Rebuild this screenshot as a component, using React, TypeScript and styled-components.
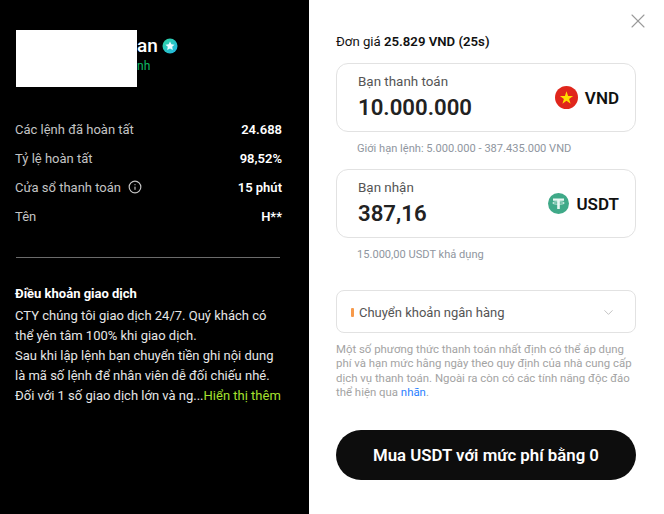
import styled, { createGlobalStyle } from 'styled-components';
import { FiChevronDown, FiInfo, FiX } from 'react-icons/fi';

const GlobalStyle = createGlobalStyle`
  html, body {
    margin: 0;
    padding: 0;
    background: #fff;
    font-family: Roboto, "Noto Sans", "Liberation Sans", sans-serif;
  }
  * {
    box-sizing: border-box;
  }
`;

const stats = [
  { label: 'Các lệnh đã hoàn tất', value: '24.688' },
  { label: 'Tỷ lệ hoàn tất', value: '98,52%' },
  { label: 'Cửa sổ thanh toán', value: '15 phút', info: true },
  { label: 'Tên', value: 'H**' },
];

const App = () => {
  return (
    <>
      <GlobalStyle />
      <Page>
        <SidePanel>
          <Merchant>
            <Redaction />
            <MerchantText>
              <MerchantName>
                an
                <svg width="16" height="16" viewBox="0 0 16 16">
                  <defs>
                    <linearGradient id="badge" x1="0" y1="0" x2="1" y2="1">
                      <stop offset="0" stopColor="#2fd6a0" />
                      <stop offset="1" stopColor="#22b4e6" />
                    </linearGradient>
                  </defs>
                  <circle cx="8" cy="8" r="7.5" fill="url(#badge)" />
                  <path
                    d="M8 3.4l1.4 2.9 3.1.4-2.3 2.1.6 3.1L8 10.4l-2.8 1.5.6-3.1-2.3-2.1 3.1-.4z"
                    fill="#e8fbff"
                  />
                </svg>
              </MerchantName>
              <MerchantStatus>nh</MerchantStatus>
            </MerchantText>
          </Merchant>
          <StatList>
            {stats.map(stat => (
              <StatRow key={stat.label}>
                <StatLabel>
                  {stat.label}
                  {stat.info ? <FiInfo size={14} /> : null}
                </StatLabel>
                <StatValue>{stat.value}</StatValue>
              </StatRow>
            ))}
          </StatList>
          <Divider />
          <Terms>
            <TermsTitle>Điều khoản giao dịch</TermsTitle>
            CTY chúng tôi giao dịch 24/7. Quý khách có
            <br />
            thể yên tâm 100% khi giao dịch.
            <br />
            Sau khi lập lệnh bạn chuyển tiền ghi nội dung
            <br />
            là mã số lệnh để nhân viên dễ đối chiếu nhé.
            <br />
            Đối với 1 số giao dịch lớn và ng...<ShowMore>Hiển thị thêm</ShowMore>
          </Terms>
        </SidePanel>
        <OrderPanel>
          <CloseButton>
            <FiX size={24} strokeWidth={1.1} />
          </CloseButton>
          <Price>
            Đơn giá <strong>25.829 VND (25s)</strong>
          </Price>
          <AmountBox>
            <AmountText>
              <AmountLabel>Bạn thanh toán</AmountLabel>
              <AmountValue>10.000.000</AmountValue>
            </AmountText>
            <Currency>
              <svg width="23" height="23" viewBox="0 0 23 23">
                <circle cx="11.5" cy="11.5" r="11.5" fill="#e0261c" />
                <path
                  d="M11.5 5.2l1.6 4.7h5l-4 3 1.5 4.8-4.1-2.9-4.1 2.9 1.5-4.8-4-3h5z"
                  fill="#ffde00"
                />
              </svg>
              VND
            </Currency>
          </AmountBox>
          <Hint>Giới hạn lệnh: 5.000.000 - 387.435.000 VND</Hint>
          <AmountBox>
            <AmountText>
              <AmountLabel>Bạn nhận</AmountLabel>
              <AmountValue>387,16</AmountValue>
            </AmountText>
            <Currency>
              <svg width="21" height="21" viewBox="0 0 21 21">
                <circle cx="10.5" cy="10.5" r="10.5" fill="#3fa988" />
                <path d="M5 5.5h11v2.2h-4.2v8.3H9.2V7.7H5z" fill="#e9f7f2" />
                <ellipse
                  cx="10.5"
                  cy="10"
                  rx="6"
                  ry="1.2"
                  fill="none"
                  stroke="#e9f7f2"
                  strokeWidth="0.8"
                />
              </svg>
              USDT
            </Currency>
          </AmountBox>
          <Hint>15.000,00 USDT khả dụng</Hint>
          <MethodSelect>
            <MethodName>
              <MethodMark />
              Chuyển khoản ngân hàng
            </MethodName>
            <FiChevronDown size={15} strokeWidth={1.3} color="#b5b5b5" />
          </MethodSelect>
          <Note>
            Một số phương thức thanh toán nhất định có thể áp dụng
            <br />
            phí và hạn mức hằng ngày theo quy định của nhà cung cấp
            <br />
            dịch vụ thanh toán. Ngoài ra còn có các tính năng độc đáo
            <br />
            thể hiện qua <NoteLink>nhãn</NoteLink>.
          </Note>
          <BuyButton>Mua USDT với mức phí bằng 0</BuyButton>
        </OrderPanel>
      </Page>
    </>
  );
};

export default App;

const Page = styled.div`
  display: flex;
  width: 664px;
  height: 514px;
  overflow: hidden;
`;

const SidePanel = styled.aside`
  width: 309px;
  background: #000;
  color: #fff;
  padding: 30px 27px 0 15px;
`;

const Merchant = styled.div`
  display: flex;
  height: 57px;
  padding-left: 1px;
`;

const Redaction = styled.div`
  flex: none;
  width: 121px;
  height: 57px;
  background: #fff;
`;

const MerchantText = styled.div`
  padding-top: 5px;
`;

const MerchantName = styled.div`
  display: flex;
  align-items: center;
  gap: 4px;
  font-size: 19px;
  line-height: 22px;
  font-weight: 500;
`;

const MerchantStatus = styled.div`
  font-size: 12px;
  line-height: 16px;
  color: #0fb866;
  margin-top: 1px;
`;

const StatList = styled.div`
  display: flex;
  flex-direction: column;
  gap: 9px;
  margin-top: 32px;
`;

const StatRow = styled.div`
  display: flex;
  align-items: center;
  justify-content: space-between;
  height: 20px;
  font-size: 13px;
`;

const StatLabel = styled.span`
  display: flex;
  align-items: center;
  gap: 7px;
  color: #c4c4c4;
`;

const StatValue = styled.span`
  font-weight: 600;
`;

const Divider = styled.div`
  height: 1px;
  margin: 31px 2px 0 1px;
  background: #6b6b6b;
`;

const Terms = styled.div`
  margin-top: 26px;
  font-size: 13px;
  line-height: 20px;
  color: #e6e6e6;
  white-space: nowrap;
`;

const TermsTitle = styled.div`
  font-weight: 700;
  color: #fff;
  margin-bottom: 2px;
`;

const ShowMore = styled.span`
  color: #a6e22e;
`;

const OrderPanel = styled.main`
  position: relative;
  flex: 1;
  background: #fff;
  padding: 33px 28px 0 27px;
  color: #111;
`;

const CloseButton = styled.div`
  position: absolute;
  top: 9px;
  right: 14px;
  display: flex;
  color: #9a9a9a;
`;

const Price = styled.div`
  font-size: 13.2px;
  line-height: 18px;
  strong {
    font-weight: 600;
  }
`;

const AmountBox = styled.div`
  display: flex;
  align-items: center;
  justify-content: space-between;
  width: 300px;
  height: 69px;
  margin-top: 12px;
  padding: 0 16px 0 21px;
  border: 1px solid #e2e2e2;
  border-radius: 12px;
`;

const AmountText = styled.div`
  padding-bottom: 1px;
`;

const AmountLabel = styled.div`
  font-size: 13.4px;
  line-height: 18px;
  color: #555;
`;

const AmountValue = styled.div`
  font-size: 22.2px;
  line-height: 28px;
  font-weight: 600;
  color: #222;
  margin-top: 2px;
`;

const Currency = styled.div`
  display: flex;
  align-items: center;
  gap: 7px;
  font-size: 17px;
  font-weight: 600;
  color: #111;
`;

const Hint = styled.div`
  margin: 9px 0 0 21px;
  font-size: 11.1px;
  line-height: 16px;
  color: #8f96a0;
`;

const MethodSelect = styled.div`
  display: flex;
  align-items: center;
  justify-content: space-between;
  width: 300px;
  height: 43px;
  margin-top: 27px;
  padding: 1px 19px 0 14px;
  border: 1px solid #e2e2e2;
  border-radius: 8px;
`;

const MethodName = styled.div`
  display: flex;
  align-items: center;
  gap: 5px;
  font-size: 13px;
  color: #555;
`;

const MethodMark = styled.span`
  width: 3px;
  height: 9px;
  border-radius: 1px;
  background: #f79a4b;
`;

const Note = styled.p`
  margin: 9px 0 0;
  font-size: 11.4px;
  line-height: 14.4px;
  color: #a3a3a3;
  white-space: nowrap;
`;

const NoteLink = styled.span`
  color: #2a7fff;
`;

const BuyButton = styled.button`
  display: block;
  width: 300px;
  height: 50px;
  margin-top: 30px;
  border: 0;
  border-radius: 25px;
  background: #0d0d0d;
  color: #fff;
  font-family: inherit;
  font-size: 16.8px;
  font-weight: 600;
`;
